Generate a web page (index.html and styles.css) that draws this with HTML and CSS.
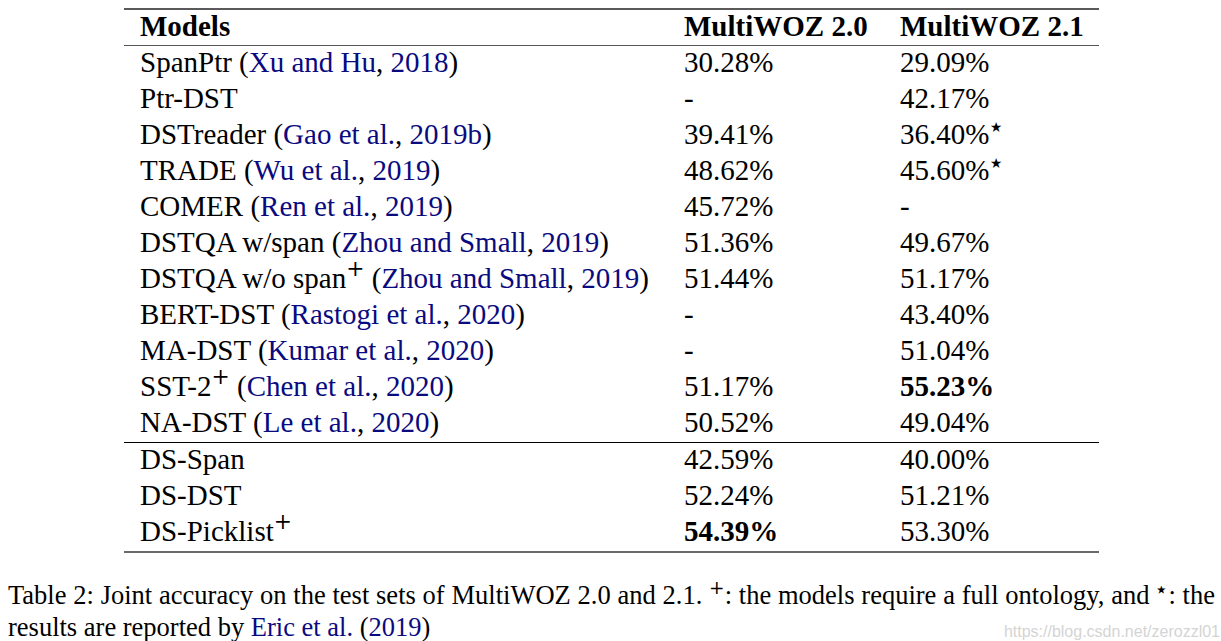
FILE: index.html
```html
<!DOCTYPE html>
<html>
<head>
<meta charset="utf-8">
<link rel="stylesheet" href="styles.css">
</head>
<body>
<div class="page">
  <div class="table">
    <div class="row head">
      <div class="cell">Models</div>
      <div class="cell">MultiWOZ 2.0</div>
      <div class="cell">MultiWOZ 2.1</div>
    </div>
    <div class="group">
      <div class="row"><div class="cell">SpanPtr (<a class="cite">Xu and Hu</a>, <a class="cite">2018</a>)</div><div class="cell">30.28%</div><div class="cell">29.09%</div></div>
      <div class="row"><div class="cell">Ptr-DST</div><div class="cell">-</div><div class="cell">42.17%</div></div>
      <div class="row"><div class="cell">DSTreader (<a class="cite">Gao et al.</a>, <a class="cite">2019b</a>)</div><div class="cell">39.41%</div><div class="cell">36.40%<sup class="star">⋆</sup></div></div>
      <div class="row"><div class="cell">TRADE (<a class="cite">Wu et al.</a>, <a class="cite">2019</a>)</div><div class="cell">48.62%</div><div class="cell">45.60%<sup class="star">⋆</sup></div></div>
      <div class="row"><div class="cell">COMER (<a class="cite">Ren et al.</a>, <a class="cite">2019</a>)</div><div class="cell">45.72%</div><div class="cell">-</div></div>
      <div class="row"><div class="cell">DSTQA w/span (<a class="cite">Zhou and Small</a>, <a class="cite">2019</a>)</div><div class="cell">51.36%</div><div class="cell">49.67%</div></div>
      <div class="row"><div class="cell">DSTQA w/o span<sup class="plus">+</sup> (<a class="cite">Zhou and Small</a>, <a class="cite">2019</a>)</div><div class="cell">51.44%</div><div class="cell">51.17%</div></div>
      <div class="row"><div class="cell">BERT-DST (<a class="cite">Rastogi et al.</a>, <a class="cite">2020</a>)</div><div class="cell">-</div><div class="cell">43.40%</div></div>
      <div class="row"><div class="cell">MA-DST (<a class="cite">Kumar et al.</a>, <a class="cite">2020</a>)</div><div class="cell">-</div><div class="cell">51.04%</div></div>
      <div class="row"><div class="cell">SST-2<sup class="plus">+</sup> (<a class="cite">Chen et al.</a>, <a class="cite">2020</a>)</div><div class="cell">51.17%</div><div class="cell"><b>55.23%</b></div></div>
      <div class="row"><div class="cell">NA-DST (<a class="cite">Le et al.</a>, <a class="cite">2020</a>)</div><div class="cell">50.52%</div><div class="cell">49.04%</div></div>
    </div>
    <div class="group last">
      <div class="row"><div class="cell">DS-Span</div><div class="cell">42.59%</div><div class="cell">40.00%</div></div>
      <div class="row"><div class="cell">DS-DST</div><div class="cell">52.24%</div><div class="cell">51.21%</div></div>
      <div class="row"><div class="cell">DS-Picklist<sup class="plus">+</sup></div><div class="cell"><b>54.39%</b></div><div class="cell">53.30%</div></div>
    </div>
  </div>
  <p class="caption">Table 2: Joint accuracy on the test sets of MultiWOZ 2.0 and 2.1. <sup class="plus">+</sup>: the models require a full ontology, and <sup class="star">⋆</sup>: the results are reported by <a class="cite">Eric et al.</a> (<a class="cite">2019</a>)</p>
  <div class="watermark">https://blog.csdn.net/zerozzl01</div>
</div>
</body>
</html>
```

FILE: styles.css
```css
html, body {
  margin: 0;
  padding: 0;
  background: #fff;
}
body {
  padding: 8px;
  font-family: "Liberation Serif", "Times New Roman", serif;
  color: #000;
}
.page {
  position: relative;
  width: 1205px;
}
.table {
  width: 975px;
  margin: 0 auto 0 116px;
  border-top: 2px solid #5a5a5a;
  border-bottom: 2px solid #6a6a6a;
  font-size: 29px;
}
.row {
  display: grid;
  grid-template-columns: 544px 216px 215px;
  height: 36px;
  align-items: start;
}
.row.head {
  height: 35px;
  font-weight: bold;
  border-bottom: 1px solid #555;
}
.group {
  border-bottom: 1.5px solid #000;
}
.group.last {
  border-bottom: none;
}
.cell {
  padding-left: 16px;
  white-space: nowrap;
  line-height: 32px;
}
.cite {
  color: #0a0a80;
  text-decoration: none;
}
sup {
  line-height: 0;
  vertical-align: baseline;
  position: relative;
}
.plus {
  font-size: 0.75em;
  top: -0.55em;
  font-family: "DejaVu Serif", serif;
  font-weight: 200;
}
.star {
  font-size: 0.95em;
  top: -0.3em;
  font-family: "DejaVu Sans", sans-serif;
  margin-left: -2px;
}
.caption {
  margin: 26px 0 0 0;
  font-size: 26.5px;
  line-height: 32px;
  text-align: justify;
  width: 1207px;
}
.caption .plus {
  font-size: 0.7em;
}
.caption .star {
  font-size: 0.85em;
  margin-left: -2px;
}
.watermark {
  position: absolute;
  right: -7px;
  bottom: 0;
  font-family: "Liberation Sans", Arial, sans-serif;
  font-size: 16px;
  color: #d4d4d4;
  line-height: 22px;
}
```
